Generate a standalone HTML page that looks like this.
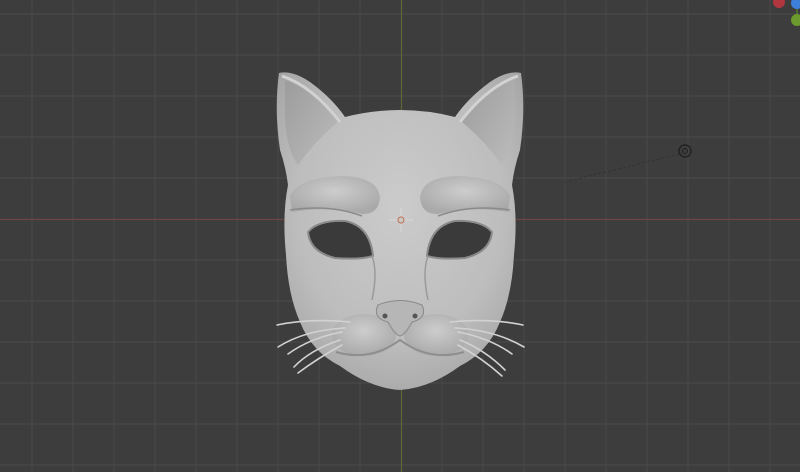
<!DOCTYPE html>
<html><head><meta charset="utf-8"><style>
html,body{margin:0;padding:0;background:#3d3d3d;overflow:hidden}
svg{display:block}
</style></head><body>
<svg width="800" height="472" viewBox="0 0 800 472" xmlns="http://www.w3.org/2000/svg">
<defs>
<radialGradient id="face" cx="50%" cy="42%" r="65%">
<stop offset="0" stop-color="#cbcbcb"/><stop offset="0.65" stop-color="#bdbdbd"/><stop offset="1" stop-color="#a4a4a4"/>
</radialGradient>
<linearGradient id="ear" x1="0" y1="0" x2="1" y2="1">
<stop offset="0" stop-color="#9c9c9c"/><stop offset="1" stop-color="#bcbcbc"/>
</linearGradient>
<radialGradient id="bump" cx="50%" cy="40%" r="60%">
<stop offset="0" stop-color="#cdcdcd"/><stop offset="1" stop-color="#a9a9a9"/>
</radialGradient>
</defs>
<rect width="800" height="472" fill="#3d3d3d"/>
<g stroke="#484848" stroke-width="1.2">
<line x1="32" y1="0" x2="32" y2="472"/><line x1="73" y1="0" x2="73" y2="472"/><line x1="114" y1="0" x2="114" y2="472"/><line x1="155" y1="0" x2="155" y2="472"/><line x1="196" y1="0" x2="196" y2="472"/><line x1="237" y1="0" x2="237" y2="472"/><line x1="278" y1="0" x2="278" y2="472"/><line x1="319" y1="0" x2="319" y2="472"/><line x1="360" y1="0" x2="360" y2="472"/><line x1="442" y1="0" x2="442" y2="472"/><line x1="483" y1="0" x2="483" y2="472"/><line x1="524" y1="0" x2="524" y2="472"/><line x1="565" y1="0" x2="565" y2="472"/><line x1="606" y1="0" x2="606" y2="472"/><line x1="647" y1="0" x2="647" y2="472"/><line x1="688" y1="0" x2="688" y2="472"/><line x1="729" y1="0" x2="729" y2="472"/><line x1="770" y1="0" x2="770" y2="472"/>
<line x1="0" y1="14" x2="800" y2="14"/><line x1="0" y1="55" x2="800" y2="55"/><line x1="0" y1="96" x2="800" y2="96"/><line x1="0" y1="137" x2="800" y2="137"/><line x1="0" y1="178" x2="800" y2="178"/><line x1="0" y1="260" x2="800" y2="260"/><line x1="0" y1="301" x2="800" y2="301"/><line x1="0" y1="342" x2="800" y2="342"/><line x1="0" y1="383" x2="800" y2="383"/><line x1="0" y1="424" x2="800" y2="424"/><line x1="0" y1="465" x2="800" y2="465"/>
</g>
<line x1="0" y1="219.5" x2="800" y2="219.5" stroke="#6e4545" stroke-width="1.2"/>
<line x1="401.5" y1="0" x2="401.5" y2="472" stroke="#5c6a3a" stroke-width="1.2"/>
<circle cx="685" cy="151" r="6" fill="none" stroke="#222" stroke-width="1.5"/>
<circle cx="685" cy="151" r="2.5" fill="none" stroke="#222" stroke-width="1"/>
<line x1="679" y1="154" x2="565" y2="182" stroke="#333" stroke-width="1" stroke-dasharray="3 2"/>
<line x1="797" y1="3" x2="797" y2="20" stroke="#5a7a3a" stroke-width="1.5"/>
<circle cx="779" cy="2" r="6" fill="#b0363f"/>
<circle cx="797" cy="3" r="6" fill="#3d7fd9"/>
<circle cx="797" cy="20" r="6" fill="#6c9a2c"/>
<!-- mask -->
<path d="M279 73 Q292 70 310 82 Q332 98 345 117 Q372 110 400 110 Q428 110 455 117 Q468 98 490 82 Q508 70 521 73 Q526 110 520 150 Q514 168 512 185 Q518 215 514 255 Q512 295 500 322 Q488 352 460 366 Q430 388 400 390 Q370 388 340 366 Q312 352 300 322 Q288 295 286 255 Q282 215 288 185 Q286 168 280 150 Q274 110 279 73 Z" fill="url(#face)"/>
<path d="M285 80 Q312 88 338 122 Q316 140 298 165 Q287 150 285 120 Z" fill="url(#ear)"/>
<path d="M515 80 Q488 88 462 122 Q484 140 502 165 Q513 150 515 120 Z" fill="url(#ear)"/>
<path d="M282 76 Q312 86 340 122" fill="none" stroke="#d2d2d2" stroke-width="3"/>
<path d="M518 76 Q488 86 460 122" fill="none" stroke="#d2d2d2" stroke-width="3"/>
<!-- brows -->
<path d="M290 196 Q298 178 340 176 Q378 176 380 198 Q378 215 362 214 Q330 206 292 212 Z" fill="url(#bump)"/>
<path d="M510 196 Q502 178 460 176 Q422 176 420 198 Q422 215 438 214 Q470 206 508 212 Z" fill="url(#bump)"/>
<path d="M290 210 Q330 204 362 216" fill="none" stroke="#8a8a8a" stroke-width="1.5"/>
<path d="M510 210 Q470 204 438 216" fill="none" stroke="#8a8a8a" stroke-width="1.5"/>
<!-- eyes -->
<path d="M308 232 Q318 220 345 221 Q370 226 373 256 Q360 260 335 258 Q310 252 308 232 Z" fill="#3a3a3a" stroke="#8a8a8a" stroke-width="2"/>
<path d="M492 232 Q482 220 455 221 Q430 226 427 256 Q440 260 465 258 Q490 252 492 232 Z" fill="#3a3a3a" stroke="#8a8a8a" stroke-width="2"/>
<path d="M372 256 Q378 272 372 300" fill="none" stroke="#9a9a9a" stroke-width="1.5"/>
<path d="M428 256 Q422 272 428 300" fill="none" stroke="#9a9a9a" stroke-width="1.5"/>
<!-- muzzle -->
<ellipse cx="364" cy="335" rx="32" ry="21" fill="url(#bump)"/>
<ellipse cx="436" cy="335" rx="32" ry="21" fill="url(#bump)"/>
<path d="M336 352 Q370 362 400 340 Q430 362 464 352" fill="none" stroke="#8e8e8e" stroke-width="2"/>
<path d="M378 305 Q400 296 422 305 Q428 318 412 322 Q405 335 400 336 Q395 335 388 322 Q372 318 378 305 Z" fill="#b6b6b6" stroke="#8a8a8a" stroke-width="1"/>
<circle cx="385" cy="316" r="2.5" fill="#555"/><circle cx="415" cy="316" r="2.5" fill="#555"/>
<g fill="none" stroke="#d2d2d2" stroke-width="1.6" stroke-linecap="round">
<path d="M350 322 Q310 318 277 325"/><path d="M345 328 Q305 330 278 347"/><path d="M342 332 Q310 338 288 354"/><path d="M340 340 Q310 350 294 367"/><path d="M342 345 Q318 358 298 373"/>
<path d="M450 322 Q490 318 523 325"/><path d="M455 328 Q495 330 524 347"/><path d="M458 332 Q490 338 512 354"/><path d="M460 340 Q485 350 505 370"/><path d="M458 345 Q482 358 502 376"/>
</g>
<g stroke="#d8d8d8" stroke-width="1">
<line x1="389" y1="220" x2="397" y2="220"/><line x1="405" y1="220" x2="413" y2="220"/>
<line x1="401" y1="208" x2="401" y2="216"/><line x1="401" y1="224" x2="401" y2="232"/>
</g>
<circle cx="401" cy="220" r="3" fill="none" stroke="#c07050" stroke-width="1"/>
</svg>
</body></html>
